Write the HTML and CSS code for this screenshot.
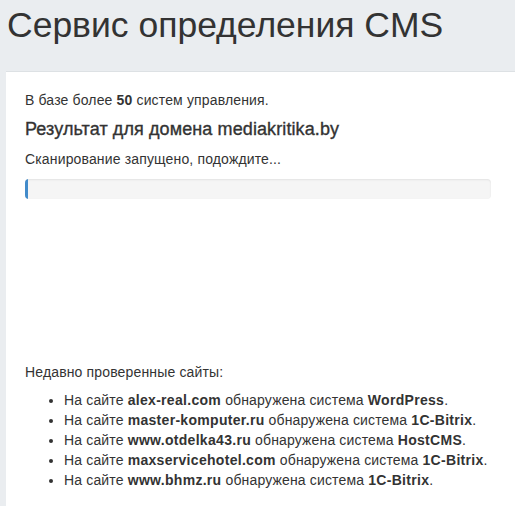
FILE: index.html
```html
<!DOCTYPE html>
<html lang="ru">
<head>
<meta charset="utf-8">
<title>Сервис определения CMS</title>
<link rel="stylesheet" href="styles.css">
</head>
<body>
<h1 class="title">Сервис определения CMS</h1>
<div class="panel">
  <p class="intro">В базе более <b>50</b> систем управления.</p>
  <h2 class="result">Результат для домена mediakritika.by</h2>
  <p class="status">Сканирование запущено, подождите...</p>
  <div class="progress"><div class="progress-bar" style="width: 3px"></div></div>
  <div class="spacer"></div>
  <p class="recent">Недавно проверенные сайты:</p>
  <ul class="sites">
    <li>На сайте <b>alex-real.com</b> обнаружена система <b>WordPress</b>.</li>
    <li>На сайте <b>master-komputer.ru</b> обнаружена система <b>1C-Bitrix</b>.</li>
    <li>На сайте <b>www.otdelka43.ru</b> обнаружена система <b>HostCMS</b>.</li>
    <li>На сайте <b>maxservicehotel.com</b> обнаружена система <b>1C-Bitrix</b>.</li>
    <li>На сайте <b>www.bhmz.ru</b> обнаружена система <b>1C-Bitrix</b>.</li>
  </ul>
</div>
</body>
</html>
```
FILE: styles.css
```css
html, body {
  margin: 0;
  padding: 0;
}
body {
  background: #eaedf0;
  font-family: "Liberation Sans", Arial, sans-serif;
  color: #333;
  font-size: 14px;
  line-height: 20px;
  letter-spacing: 0.15px;
  overflow: hidden;
}
.title {
  margin: 0;
  padding: 5px 0 0 7px;
  font-size: 35.5px;
  font-weight: normal;
  line-height: 40px;
  letter-spacing: 0;
  height: 71px;
  box-sizing: border-box;
}
.panel {
  margin-left: 6px;
  background: #fff;
  border-top: 1px solid #dde1e4;
  padding: 18px 24px 40px 19px;
}
.intro {
  margin: 0 0 7px;
}
.result {
  margin: 0 0 8px;
  font-size: 18px;
  font-weight: normal;
  line-height: 24px;
  letter-spacing: 0.1px;
  -webkit-text-stroke: 0.35px #333;
}
.status {
  margin: 0 0 10px;
}
.progress {
  width: 466px;
  height: 20px;
  background: #f5f5f5;
  border-radius: 4px;
  box-shadow: inset 0 1px 2px rgba(0,0,0,0.08);
  overflow: hidden;
}
.progress-bar {
  height: 100%;
  background: #428bca;
}
.spacer {
  height: 163px;
}
.recent {
  margin: 0 0 8px;
}
.sites {
  margin: 0;
  padding-left: 39px;
}
.sites li {
  line-height: 20px;
}
.sites b {
  letter-spacing: 0.3px;
}
```
